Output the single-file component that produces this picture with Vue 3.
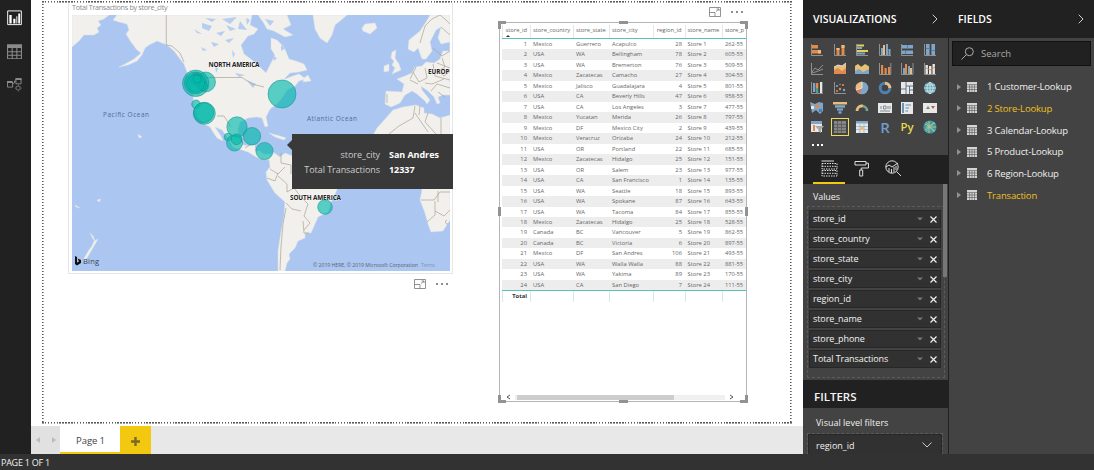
<script setup>
const columns = ['store_id', 'store_country', 'store_state', 'store_city', 'region_id', 'store_name', 'store_p']
const rows = [
  [1, 'Mexico', 'Guerrero', 'Acapulco', 28, 'Store 1', '262-55'],
  [2, 'USA', 'WA', 'Bellingham', 78, 'Store 2', '605-55'],
  [3, 'USA', 'WA', 'Bremerton', 76, 'Store 3', '509-55'],
  [4, 'Mexico', 'Zacatecas', 'Camacho', 27, 'Store 4', '304-55'],
  [5, 'Mexico', 'Jalisco', 'Guadalajara', 4, 'Store 5', '801-55'],
  [6, 'USA', 'CA', 'Beverly Hills', 47, 'Store 6', '958-55'],
  [7, 'USA', 'CA', 'Los Angeles', 3, 'Store 7', '477-55'],
  [8, 'Mexico', 'Yucatan', 'Merida', 26, 'Store 8', '797-55'],
  [9, 'Mexico', 'DF', 'Mexico City', 2, 'Store 9', '439-55'],
  [10, 'Mexico', 'Veracruz', 'Orizaba', 24, 'Store 10', '212-55'],
  [11, 'USA', 'OR', 'Portland', 22, 'Store 11', '685-55'],
  [12, 'Mexico', 'Zacatecas', 'Hidalgo', 25, 'Store 12', '151-55'],
  [13, 'USA', 'OR', 'Salem', 23, 'Store 13', '977-55'],
  [14, 'USA', 'CA', 'San Francisco', 1, 'Store 14', '135-55'],
  [15, 'USA', 'WA', 'Seattle', 18, 'Store 15', '893-55'],
  [16, 'USA', 'WA', 'Spokane', 87, 'Store 16', '643-55'],
  [17, 'USA', 'WA', 'Tacoma', 84, 'Store 17', '855-55'],
  [18, 'Mexico', 'Zacatecas', 'Hidalgo', 25, 'Store 18', '528-55'],
  [19, 'Canada', 'BC', 'Vancouver', 5, 'Store 19', '862-55'],
  [20, 'Canada', 'BC', 'Victoria', 6, 'Store 20', '897-55'],
  [21, 'Mexico', 'DF', 'San Andres', 106, 'Store 21', '493-55'],
  [22, 'USA', 'WA', 'Walla Walla', 88, 'Store 22', '881-55'],
  [23, 'USA', 'WA', 'Yakima', 89, 'Store 23', '170-55'],
  [24, 'USA', 'CA', 'San Diego', 7, 'Store 24', '111-55']
]
const bubbles = [
  [205.5, 82, 10], [195.7, 83.3, 13.2], [195.5, 83, 11], [196.5, 79, 6], [203, 86, 4.5], [195.7, 83.3, 9], [197, 79, 4],
  [196, 104.3, 4.3], [204.3, 113.3, 11], [203.6, 112.6, 10], [237, 127, 10.2], [252, 136.2, 8.7],
  [228, 137, 3.8], [234.5, 143, 8], [236.5, 139.3, 5.4], [282, 94, 14], [264.5, 151, 8.6], [325, 207, 7.3]
]
const values = ['store_id', 'store_country', 'store_state', 'store_city', 'region_id', 'store_name', 'store_phone', 'Total Transactions']
const tables = [
  ['1 Customer-Lookup', false], ['2 Store-Lookup', true], ['3 Calendar-Lookup', false],
  ['5 Product-Lookup', false], ['6 Region-Lookup', false], ['Transaction', true]
]
const O = '#e08a4c', B = '#7fa6c9', W = '#e8e8e8', Y = '#e3d25a', G = '#9a9a9a', T = '#e9bd7d', D = '#4f81b0'
// Each gallery icon is a list of primitives on a 14x14 grid: r = rect, p = stroked path, f = filled path, c = circle
const axis = ['p', 'M1.5 1V12.5H13', G]
const gallery = [
  [axis, ['r', 2, 2, 6, 3.5, O], ['r', 2, 7, 9, 3.5, O], ['r', 8, 7, 3, 3.5, T]],
  [axis, ['r', 3.5, 5, 3, 7, O], ['r', 8.5, 2, 3, 10, O], ['r', 3.5, 5, 3, 2, T], ['r', 8.5, 2, 3, 3, T]],
  [axis, ['r', 2, 1.5, 7, 2, Y], ['r', 2, 4, 5, 2, B], ['r', 2, 7, 11, 2, Y], ['r', 2, 9.5, 8, 2, B]],
  [axis, ['r', 3, 5, 2, 7, B], ['r', 5, 2, 2, 10, T], ['r', 8, 1, 2, 11, B], ['r', 10.5, 6, 2, 6, B]],
  [axis, ['r', 2, 2, 11, 3.5, B], ['r', 2, 7.5, 11, 3.5, B], ['r', 7, 2, 1, 3.5, D], ['r', 5, 7.5, 1, 3.5, D]],
  [axis, ['r', 3, 1, 3.6, 11, B], ['r', 8.4, 1, 3.6, 11, B], ['r', 3, 5, 3.6, 1, D], ['r', 8.4, 7, 3.6, 1, D]],
  [axis, ['p', 'M2 10L5 6L8 8L13 3M2 11L7 9.5L13 7', G]],
  [['f', 'M1 12V5L5 3L9 4L13 1V12Z', T], ['f', 'M1 12V8L5 6L9 9L13 6V12Z', O], ['p', 'M1 5L5 3L9 4L13 1', W]],
  [['f', 'M0 12V4L3 2L6 5L10 2L14 5V12Z', T], ['f', 'M0 12V9L4 7L8 10L14 7V12Z', B], ['p', 'M0 5L3 3L7 6L11 3L14 5', Y]],
  [axis, ['r', 3, 3, 2.2, 9, O], ['r', 6.5, 6, 2.2, 6, O], ['r', 10, 5, 2.2, 7, O], ['p', 'M12.8 1V12', G]],
  [axis, ['r', 3, 6, 2, 6, B], ['r', 5, 2, 2, 10, O], ['r', 8, 4, 2, 8, B], ['r', 10, 6, 2, 6, T], ['p', 'M13 1V12', G]],
  [axis, ['r', 2.5, 3, 2.4, 9, W], ['r', 6, 4, 2.4, 8, W], ['r', 9.5, 2, 2.4, 10, W], ['p', 'M3 6L7 8L12 5', O]],
  [axis, ['r', 3, 2, 2.3, 9, B], ['r', 6, 2, 2.3, 5, O], ['r', 6, 7, 2.3, 5, '#579c85'], ['r', 10, 1, 2.3, 11, W]],
  [axis, ['c', 4, 5, 1.1, B], ['c', 7, 8, 1.2, O], ['c', 10, 4, 1.1, O], ['c', 11, 9, 1.2, B], ['c', 4, 10, 1, O], ['c', 7, 3.5, .8, B]],
  [['c', 7, 7, 6.3, B], ['f', 'M7 7V.7A6.3 6.3 0 0 0 1 9Z', T], ['f', 'M7 7L1 9A6 6 0 0 0 5 13Z', '#d77b65'], ['p', 'M7 .7V7L1 9', W]],
  [['ring', 7, 7, 4.8, D], ['p', 'M7 2.2A4.8 4.8 0 0 1 11.8 7', T, 3]],
  [['r', 1, 1, 12, 12, W], ['p', 'M6 1V13M1 8H6M6 5H13M9.5 5V13M9.5 9H13', '#536b7e']],
  [['c', 7, 7, 6, '#5aa7b8'], ['p', 'M7 1V13M1 7H13M2 4H12M2 10H12M7 1C3 4 3 10 7 13C11 10 11 4 7 1', W, .8]],
  [['f', 'M0 1L5 3L9 1L13 2V10L10 13L6 9L2 12Z', B], ['r', 5, 4, 4, 3, O], ['r', 1, 5, 3, 3, W], ['r', 9, 8, 3, 3, D]],
  [['r', 0, 1, 14, 2.5, T], ['r', 2, 4.2, 10, 2.5, B], ['r', 4, 7.4, 6, 2.2, B], ['r', 5.5, 10.3, 3, 2.3, B]],
  [['p', 'M2 10A5 5 0 0 1 12 10', '#7aa690', 2.6], ['p', 'M2 10A5 5 0 0 1 8 5', T, 2.6]],
  [['r', 0, 2, 14, 10, W], ['p', 'M3 5V8M5.5 5V8H8V5H5.5M10 5V8M12 5V8M2 10H12', '#7c858d']],
  [['r', 1, 1, 12, 12, W], ['p', 'M3 2V12', '#4b7da7', 1.6], ['p', 'M5.5 4H11M5.5 7H9M5.5 10H8', D]],
  [['r', 0, 2, 14, 10, W], ['f', 'M3 8L5 5L7 8Z', '#5d9673'], ['f', 'M8 5H12L10 8Z', '#bc604b']],
  [['r', 1, 1, 11, 11, W], ['r', 1, 1, 11, 3, B], ['r', 3, 5, 2, 6, O], ['f', 'M5 6H14L11 9.5V13L8.5 11.5V9.5Z', '#a7a7a7']],
  [['r', 1, 1, 12, 12, '#858585'], ['p', 'M1 4.5H13M1 7.5H13M1 10.5H13M4.5 1V13M8.5 1V13', '#5d5d5d']],
  [['r', 1, 1, 12, 12, W], ['r', 1, 1, 12, 2.5, B], ['p', 'M1 6.5H13M1 9.5H13M5 4V13M9 4V13', '#9db9cf'], ['r', 5, 7, 4, 3, T]],
  [['t', 'R', '#6f9cc8', 15]],
  [['t', 'Py', '#e5d84e', 11.5]],
  [['c', 7, 7, 6.6, '#3d9ba8'], ['p', 'M2 4L6 6L12 3M2 10L6 7L12 11M6 1V13M3 7H13', '#d9c46d', .9], ['p', 'M3 2L11 12M11 2L3 12', '#83c7c3', .8]]
]
</script>

<template>
  <div class="app">
    <div class="main">
      <nav class="rail">
        <svg viewBox="0 0 16 16"><path d="M.7.7H15.3V15.3H.7Z" fill="none" stroke="#fff" /><path d="M2.5 5H5V14H2.500ZM6.700 9H9V14H6.700ZM10 6.500H11V14H10ZM12 3.500H14V14H12Z" fill="#fff" /></svg>
        <svg viewBox="0 0 16 16"><path d="M0 0H16V4H0Z" fill="#8b8b8b" /><path d="M.6 1V15.400H15.400V1M.6 8H15.400M.6 11.700H15.400M5.500 4V15M10.500 4V15" fill="none" stroke="#8b8b8b" stroke-width="1.100" /></svg>
        <svg viewBox="0 0 16 16"><path d="M.5 5.500H6V10.500H.5ZM9.500 1.500H15V7H9.500ZM6 7L8 6V4H9.500M12 8V15M8.500 11.500H15.500M9.800 9.300L14.200 13.700M14.200 9.300L9.800 13.700" fill="none" stroke="#8b8b8b" /><path d="M0 4H6V6H0ZM9 1H15.500V3H9Z" fill="#8b8b8b" /><circle cx="12" cy="11.500" r="1.500" fill="#212121" /></svg>
      </nav>

      <section class="workspace">
        <div class="canvas">
          <div class="page"></div>

          <article class="map-visual">
            <h2>Total Transactions by store_city</h2>
            <svg class="map" viewBox="72 15 378 256">
              <rect x="72" y="15" width="378" height="256" fill="#abc6f0" />
              <g fill="#f1f0ed" stroke="#dfe2e3" stroke-width=".5" stroke-linejoin="round">
                <path d="M72 15H109L104 19L98 21L101 25L97 28L99 32L94 35H84L79 41L72 47Z" />
                <path d="M117 15L113 20L119 22L127 24L129 30L126 34L131 42L137 50L141 53L134 59L125 64L119 67L128 65L137 61L142 55L145 48L149 45L157 41L167 45L174 51L180 59L184 64L187 72L191 81L193 95L194 107L198 117L204 124L210 127L213 132L217 138L223 141L221 136L215 127L222 130L228 138L233 147L242 150L248 152L256 157L262 159L268 160L271 154L264 154L260 151H255V145L249 146L243 145L239 138L238 130L240 122L248 118L257 117L262 118L265 127L268 126L266 117L270 109L277 104L282 98L287 90L295 86L299 81L306 79L299 74L290 77L283 80L290 73L299 72L307 70L304 64L296 61L289 59L284 47L277 40L271 38V49L275 55L271 63L266 73L260 67L252 60L244 54L241 45L248 36L254 34L258 29L250 25L252 15Z" />
                <path d="M258 15H287L291 25L283 29L293 35L285 37L274 31L267 29L263 22ZM308 75L311 81L303 82L304 78ZM313 15H347L340 21L335 25L332 35L327 43L320 38L315 29ZM362 28L365 24L375 23L377 28L370 34L363 31Z" />
                <path d="M450 15H430L426 22L420 31L409 40L408 49L414 52L418 48L422 59L426 59L432 51L430 42L436 30L441 27L438 38L441 44L450 42V51L443 51L440 59L434 63L426 62L422 66L415 67L412 73L405 76L397 79L404 84L402 92L386 91L385 104L391 107L400 103L405 95L412 91L417 94L425 101L427 104L430 100L422 90L421 86L428 91L434 97L437 104L440 103L438 97L443 95L450 95Z" />
                <path d="M392 52L396 50L395 58L399 64L401 70L392 74L395 68L392 65L394 61L391 58ZM384 66L389 64L389 71L384 72Z" />
                <path d="M450 115L440 118L432 114L424 113V108L416 105L403 107L393 110L386 118L377 128L372 137L372 160L389 175L414 174L422 190L420 200L425 213L428 224L431 232L443 231L450 220Z" />
                <path d="M273 152L269 159L270 167L266 172L267 180L275 193L285 202L284 216L281 232L278 251V271H285L287 263L290 259L289 254L295 248L298 241L305 238V233H311L315 224L318 217L328 212L331 202L337 190L337 184L320 172L300 159L285 153L280 157Z" />
                <path d="M269 133L280 136L286 138L284 140L275 137ZM83 260L89 250L92 246L94 241L98 239L94 246L90 253L85 261ZM90 233L93 239L95 241L93 236ZM138 134L142 137L139 138ZM97 200L101 199L99 202ZM75 205L80 208L76 207Z" />
              </g>
              <g fill="#b7cef0" stroke="none">
                <path d="M202 23L212 26L209 31L202 28ZM216 33L225 31L221 36ZM194 29L202 34L197 33ZM211 42L219 44L214 47ZM205 18L216 19L212 22ZM222 19L237 17L230 24ZM225 40L234 38L229 43ZM201 47L207 50L203 51ZM240 21L247 30L238 29ZM235 73L245 75L239 77ZM247 80L256 84L253 88L249 83ZM232 50L235 54L233 58ZM215 64L218 69L216 73ZM265 19L274 21L270 26ZM281 45L286 48L281 51ZM226 25L236 29L230 31ZM246 18L250 20L247 25ZM272 55L277 58L274 61Z" />
              </g>
              <g fill="none" stroke="#aaa391" stroke-width=".7">
                <path d="M166.300 15V45L172 46L180 53L184 62M205 77.500H242L252 84L264 87M217 116L224 116L231 127M245 148L251 144M281 153V163L291 165V174M270 169L278 174L285 167M267 178L275 181L278 173M278 176L287 184V192L294 188L301 197L308 204L304 216L310 223L304 230M286 203L292 209L301 211M286 208L283 224L281 247L280 270M303 221L304 233L309 233" />
                <path d="M420 43L425 26L432 19L440 15L446 20L450 24M441 27L450 35M410 80L418 84M413 72L419 82L427 78L425 68M433 64L435 76L450 80M425 83L432 84L444 79M431 91L437 84L450 88M438 92L445 97M416 67L410 79M387 94V103M415 106L413 118L399 126L389 134M415 113L428 132M420 106L419 115M428 113L425 122L436 134M441 118V134M433 48L442 56L450 51M437 63L450 68M442 58L445 67L438 71L444 76L450 71M421 200H434L440 192H450M435 201V215L427 222M435 211L444 216L450 210M438 191V202M447 220A2 2 0 1 0 448 224" />
              </g>
              <g class="map-labels">
                <text x="208.500" y="67" textLength="51">NORTH AMERICA</text>
                <text x="428" y="73.500" textLength="21.500" lengthAdjust="spacingAndGlyphs">EUROP</text>
                <text x="290" y="199.500" textLength="51">SOUTH AMERICA</text>
                <text class="ocean" x="103" y="117" textLength="46">Pacific Ocean</text>
                <text class="ocean" x="307" y="120.500" textLength="50">Atlantic Ocean</text>
              </g>
              <circle v-for="(b, i) in bubbles" :key="i" :cx="b[0]" :cy="b[1]" :r="b[2]" fill="#01b8aa" fill-opacity=".64" stroke="#138f86" stroke-opacity=".65" stroke-width=".8" />
              <path d="M75 256L77 257V262.500L79 261.500L77.500 258.500L81 260V263L77 265.500L75 264Z" fill="#111" />
              <text x="83" y="263.500" textLength="16" font-size="7.500" fill="#394451">Bing</text>
              <text class="copyright" x="313" y="267" textLength="105">© 2019 HERE, © 2019 Microsoft Corporation</text>
              <text class="copyright link" x="421" y="267" textLength="14">Terms</text>
            </svg>
          </article>

          <div class="tooltip">
            <span>store_city</span><b>San Andres</b>
            <span>Total Transactions</span><b>12337</b>
          </div>

          <div class="visual-tools map-tools">
            <svg viewBox="0 0 12 10"><path d="M.5.5H11.500V9.500H.5ZM.5 5.500H6V9.500M7 4.500L10 2M7.500 2H10V4" fill="none" stroke="#777" stroke-width=".8" /></svg>
            <i></i><i></i><i></i>
          </div>
          <div class="visual-tools table-tools">
            <svg viewBox="0 0 12 10"><path d="M.5.5H11.500V9.500H.5ZM.5 5.500H6V9.500M7 4.500L10 2M7.500 2H10V4" fill="none" stroke="#777" stroke-width=".8" /></svg>
            <i></i><i></i><i></i>
          </div>

          <article class="table-visual">
            <div class="grid">
              <div class="row head"><span v-for="c in columns" :key="c">{{ c }}</span></div>
              <div v-for="r in rows" :key="r[0]" class="row"><span v-for="(c, i) in r" :key="i">{{ c }}</span></div>
              <div class="row total"><span>Total</span><span v-for="n in 6" :key="n"></span></div>
            </div>
            <div class="hscroll">
              <svg viewBox="0 0 5 6"><path d="M4 1L1 3L4 5" /></svg>
              <div class="track"><div class="thumb"></div></div>
              <svg viewBox="0 0 5 6"><path d="M1 1L4 3L1 5" /></svg>
            </div>
            <svg class="handles" viewBox="0 0 250 382"><path d="M0 0H8V3H3V8H0ZM242 0H250V8H247V3H242ZM0 374H3V379H8V382H0ZM247 374H250V382H242V379H247ZM121 0H130V3H121ZM121 379H130V382H121ZM0 186H3V195H0ZM247 186H250V195H247Z" fill="#929292" /></svg>
          </article>
        </div>
        <footer class="tabs">
          <div class="pager">
            <svg viewBox="0 0 4 6"><path d="M4 0V6L0 3Z" /></svg>
            <svg viewBox="0 0 4 6"><path d="M0 0V6L4 3Z" /></svg>
          </div>
          <div class="tab">Page 1</div>
          <div class="add"><svg viewBox="0 0 9 9"><path d="M3.300 0H5.700V3.300H9V5.700H5.700V9H3.300V5.700H0V3.300H3.300Z" fill="#7b6a24" /></svg></div>
        </footer>
      </section>

      <aside class="viz">
        <header class="panel-head"><span>VISUALIZATIONS</span><svg viewBox="0 0 6 10"><path d="M.7.7L5 5L.7 9.300" /></svg></header>
        <div class="gallery">
          <div v-for="(icon, i) in gallery" :key="i" class="cell" :class="{ selected: i === 25 }">
            <svg viewBox="0 0 14 14">
              <template v-for="(s, j) in icon" :key="j">
                <rect v-if="s[0] === 'r'" :x="s[1]" :y="s[2]" :width="s[3]" :height="s[4]" :fill="s[5]" />
                <path v-else-if="s[0] === 'p'" :d="s[1]" fill="none" :stroke="s[2]" :stroke-width="s[3] || 0.9" />
                <path v-else-if="s[0] === 'f'" :d="s[1]" :fill="s[2]" />
                <circle v-else-if="s[0] === 'c'" :cx="s[1]" :cy="s[2]" :r="s[3]" :fill="s[4]" />
                <circle v-else-if="s[0] === 'ring'" :cx="s[1]" :cy="s[2]" :r="s[3]" fill="none" :stroke="s[4]" stroke-width="3" />
                <text v-else x="7" :y="s[1] === 'R' ? 12.5 : 10.5" text-anchor="middle" font-weight="600" :fill="s[2]" :font-size="s[3]">{{ s[1] }}</text>
              </template>
            </svg>
          </div>
        </div>
        <div class="more"><i></i><i></i><i></i></div>
        <div class="modes">
          <div class="mode active"><svg viewBox="0 0 17 17"><path d="M.5 1H13" /><path d="M1 3.500H16V9H1ZM1 10.500H16V16H1Z" stroke-dasharray="1.500 1" /><path d="M1 6.300H16M1 13.300H16" stroke-dasharray="1.500 1" /></svg></div>
          <div class="mode"><svg viewBox="0 0 17 17"><path d="M2 1.500H13V5H2ZM13 3.200H15.500V8H8.200V10M6.700 10H9.700V16H6.700Z" /></svg></div>
          <div class="mode"><svg viewBox="0 0 17 17"><circle cx="7" cy="7" r="6.200" /><path d="M11.500 11.500L16 16M1 7L4 5L7 7L13 3M4 12V8M6.500 13V9M9 12V7M11 10V6" /></svg></div>
        </div>
        <div class="wells">
          <h3>Values</h3>
          <div class="well">
            <div v-for="v in values" :key="v" class="pill">
              <span>{{ v }}</span>
              <svg class="caret" viewBox="0 0 6 4"><path d="M0 .5H6L3 3.500Z" fill="#777" /></svg>
              <svg class="close" viewBox="0 0 7 7"><path d="M.5.5L6.500 6.500M6.500.5L.5 6.500" /></svg>
            </div>
          </div>
          <div class="vscroll"></div>
        </div>
        <header class="filters-head">FILTERS</header>
        <div class="filters">
          <h3>Visual level filters</h3>
          <div class="filter"><span>region_id</span><svg viewBox="0 0 10 6"><path d="M.5.5L5 5L9.500.5" /></svg></div>
        </div>
      </aside>

      <aside class="fields">
        <header class="panel-head"><span>FIELDS</span><svg viewBox="0 0 6 10"><path d="M.7.7L5 5L.7 9.300" /></svg></header>
        <div class="search"><svg viewBox="0 0 13 13"><circle cx="8.300" cy="4.700" r="4" /><path d="M5.500 7.500L.5 12.500" /></svg><span>Search</span></div>
        <ul>
          <li v-for="t in tables" :key="t[0]" :class="{ used: t[1] }">
            <svg class="arrow" viewBox="0 0 4 6"><path d="M0 0V6L4 3Z" fill="#929292" /></svg>
            <svg class="sheet" viewBox="0 0 10 10"><path d="M0 0H10V10H0Z" fill="#d5d5d5" /><path d="M0 2.600H10M0 5H10M0 7.500H10M2.600 2.600V10M5 2.600V10M7.500 2.600V10" stroke="#555" stroke-width=".6" /></svg>
            <span>{{ t[0] }}</span>
          </li>
        </ul>
      </aside>
    </div>
    <div class="status">PAGE 1 OF 1</div>
  </div>
</template>

<style>
body { overflow: hidden; }
</style>

<style scoped>
* { box-sizing: border-box; }
.app { width: 1094px; height: 470px; display: flex; flex-direction: column; font-family: "Open Sans", "Noto Sans", sans-serif; overflow: hidden; background: #323232; }
.main { height: 454px; display: flex; }
svg { display: block; flex: none; }
h2, h3, ul { margin: 0; padding: 0; font-weight: 400; list-style: none; }
.rail { width: 31px; background: #212121; padding: 10px 0 0 7px; display: flex; flex-direction: column; gap: 18px; }
.rail svg { width: 15px; height: 15.5px; }
.workspace { width: 772px; display: flex; flex-direction: column; background: #fff; }
.canvas { height: 426px; position: relative; }
.page { position: absolute; left: 11px; top: 1px; width: 750px; height: 423px;
  background:
    repeating-linear-gradient(90deg, #5a5a5a 0 1.500px, #fff 1.500px 2.900px) 0 0 / 100% 1.600px no-repeat,
    repeating-linear-gradient(90deg, #5a5a5a 0 1.500px, #fff 1.500px 2.900px) 0 100% / 100% 1.600px no-repeat,
    repeating-linear-gradient(#5a5a5a 0 1.500px, #fff 1.500px 3px) 0 0 / 1.600px 100% no-repeat,
    repeating-linear-gradient(#5a5a5a 0 1.500px, #fff 1.500px 3px) 100% 0 / 1.600px 100% no-repeat; }
.map-visual { position: absolute; left: 37px; top: 3px; width: 385px; height: 271px; border: 1px solid #e6e6e6; border-top: 0; padding-left: 3px; }
.map-visual h2 { height: 12px; line-height: 9px; font-size: 7.200px; letter-spacing: -.3px; color: #8a8a8a; white-space: nowrap; }
.map { width: 378px; height: 256px; }
.map-labels text { font-size: 6.400px; font-weight: 700; fill: #222; stroke: #fff; stroke-width: 1px; stroke-opacity: .5; paint-order: stroke; }
.map-labels .ocean { font-weight: 400; fill: #4e6c9c; stroke: none; }
.copyright { font-size: 5.200px; fill: #5e6570; }
.copyright.link { fill: #8496b5; }
.tooltip { position: absolute; left: 260.500px; top: 134px; width: 161px; height: 55px; background: #393939; display: grid; grid-template-columns: 88.500px 1fr; grid-auto-rows: 14.500px; column-gap: 9px; padding-top: 14px; font-size: 9px; letter-spacing: -.05px; line-height: 14px; color: #ccc; white-space: nowrap; }
.tooltip::before { content: ""; position: absolute; left: -5px; top: 5px; border: 6px solid transparent; border-left: 0; border-right: 6px solid #393939; }
.tooltip span { text-align: right; }
.tooltip b { color: #fff; }
.visual-tools { position: absolute; display: flex; align-items: center; gap: 3px; }
.visual-tools svg { width: 12px; height: 10px; margin-right: 7px; }
.visual-tools i { width: 2px; height: 2px; background: #666; border-radius: 1px; }
.map-tools { left: 383px; top: 279px; }
.table-tools { left: 678px; top: 7px; }
.table-visual { position: absolute; left: 467px; top: 21px; width: 250px; height: 382px; padding: 4px 4px 0; display: flex; flex-direction: column; justify-content: space-between; }
.table-visual::before { content: ""; position: absolute; inset: 1px; border: 1px solid #b5b5b5; }
.handles { position: absolute; left: 0; top: 0; width: 250px; height: 382px; }
.grid { width: 243.500px; }
.row { height: 10.470px; display: grid; grid-template-columns: 28px 43px 36px 43.500px 32px 37.500px 23.500px; font-size: 5.800px; line-height: 11px; color: #666; }
.row span { white-space: nowrap; padding: 0 2.500px 0 2px; border-left: 1px solid transparent; }
.row span:nth-child(1), .row span:nth-child(5) { text-align: right; }
.row span:nth-child(1) { padding-right: 3px; }
.row span:nth-child(7) { padding-right: 0; letter-spacing: -.05px; }
.row:nth-child(odd) { background: #ededed; }
.row.head { height: 14px; background: #fff; border-bottom: 1px solid #58c2b9; position: relative; }
.row.head span { padding-right: 0; border-color: #e6e6e6; text-align: left; }
.row.head span:nth-child(1), .row.head span:nth-child(5) { text-align: right; padding-right: 3px; }
.row.head span:nth-child(7) { letter-spacing: -.15px; }
.row.head::after { content: ""; position: absolute; left: 4px; top: 9.500px; border: 2px solid transparent; border-top: 0; border-bottom: 2.500px solid #333; }
.row.total { border-top: 1px solid #58c2b9; background: #fff; font-weight: 700; color: #333; height: 11px; }
.row.total span { border-color: #cfeae7; }
.hscroll { height: 6px; margin: 0 10px 3px 4px; display: flex; align-items: center; gap: 4px; }
.hscroll svg { width: 5px; height: 6px; fill: none; stroke: #444; stroke-width: .9; }
.track { flex: 1; height: 5px; background: #f0f0f0; }
.thumb { width: 157px; height: 5px; background: #cdcdcd; margin-left: 2px; }
.tabs { height: 28px; display: flex; background: #e8e8e8; }
.pager { width: 29px; display: flex; justify-content: space-between; align-items: center; padding: 0 4px 0 5px; background: #e1e1e1; }
.pager svg { width: 4px; height: 6px; fill: #bcbcbc; }
.tab { width: 60px; background: #fff; border-bottom: 2px solid #f2c811; font-size: 9.500px; line-height: 29px; text-align: center; color: #444; padding-left: 1px; letter-spacing: -.1px; }
.add { width: 31px; background: #f2c811; display: flex; align-items: center; justify-content: center; padding-top: 2px; }
.add svg { width: 9px; height: 9px; }
.viz { width: 146px; background: #434343; border-right: 1px solid #212121; display: flex; flex-direction: column; overflow: hidden; color: #f0f0f0; }
.panel-head { height: 38px; flex: none; background: #212121; display: flex; align-items: center; justify-content: space-between; padding: 0 10px 0 10px; font-size: 10.500px; font-weight: 600; color: #fff; }
.panel-head svg { width: 6px; height: 10px; fill: none; stroke: #ccc; }
.fields .panel-head { padding-left: 9px; }
.gallery { height: 98px; flex: none; padding: 2px 0 0 3px; display: grid; grid-template-columns: repeat(6, 22.500px); grid-auto-rows: 19.300px; justify-items: center; align-items: center; }
.cell { width: 18px; height: 18px; display: flex; align-items: center; justify-content: center; }
.cell svg { width: 14px; height: 14px; }
.cell.selected { outline: 1.500px solid #f0dc58; outline-offset: -1px; }
.more { height: 19px; flex: none; display: flex; gap: 2.500px; padding: 8px 0 0 9px; }
.more i { width: 2px; height: 2px; background: #fff; }
.modes { height: 29px; flex: none; background: #212121; display: flex; padding-left: 10px; }
.mode { width: 32px; display: flex; align-items: center; justify-content: center; border-bottom: 2px solid transparent; }
.mode.active { border-color: #f2c811; }
.mode svg { width: 17px; height: 17px; fill: none; stroke: #ddd; stroke-width: 1; }
.wells { height: 196px; flex: none; position: relative; padding: 6px 4px 0; }
.wells h3 { height: 16px; line-height: 13px; font-size: 9px; padding-left: 6px; letter-spacing: -.1px; }
.well { border: 1px dashed #5b5b5b; height: 172px; width: 138px; padding: 3px 3px 0 1px; display: flex; flex-direction: column; gap: 2px; }
.pill { height: 18px; background: #313131; border: 1px solid #272727; display: flex; align-items: center; padding: 0 3px; font-size: 9px; line-height: 16px; color: #f3f3f3; letter-spacing: -.08px; }
.pill span { flex: 1; white-space: nowrap; }
.caret { width: 6px; height: 4px; margin-right: 7px; }
.close { width: 7px; height: 7px; fill: none; stroke: #eee; stroke-width: 1.200; }
.vscroll { position: absolute; right: 1px; top: 0; width: 4px; height: 93px; background: #777; }
.filters-head { height: 28px; flex: none; background: #212121; color: #f4f4f4; font-size: 11.500px; font-weight: 600; line-height: 33px; padding-left: 11px; }
.filters { flex: 1; padding: 8px 6px 0 5px; }
.filters h3 { height: 18px; font-size: 9px; line-height: 14px; padding-left: 8px; }
.filter { height: 24px; background: #313131; border: 1px solid #272727; outline: 1px dashed #5b5b5b; display: flex; justify-content: space-between; align-items: center; padding: 0 9px 2px 7px; font-size: 9px; }
.filter svg { width: 10px; height: 6px; fill: none; stroke: #ccc; }
.fields { flex: 1; background: #434343; }
.search { height: 25px; margin: 3px 3px 0; border: 1px solid #111; background: #212121; display: flex; align-items: center; gap: 7px; padding-left: 8px; font-size: 9.500px; color: #aaa; }
.search svg { width: 13px; height: 13px; fill: none; stroke: #aaa; }
.fields ul { padding-top: 10px; }
.fields li { height: 21.650px; display: flex; align-items: center; padding-left: 8px; font-size: 9.500px; letter-spacing: -.17px; color: #f0f0f0; white-space: nowrap; }
.arrow { width: 4px; height: 6px; margin-right: 6px; }
.sheet { width: 10px; height: 10px; margin-right: 10px; }
.fields li.used { color: #f0c020; }
.status { height: 16px; font-size: 9px; letter-spacing: -.25px; line-height: 18px; color: #f1f1f1; padding-left: 1px; }
</style>
